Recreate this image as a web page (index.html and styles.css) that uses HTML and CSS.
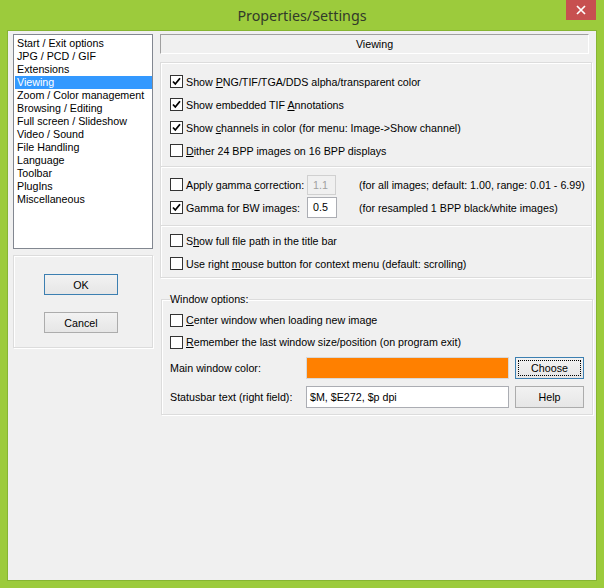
FILE: index.html
```html
<!DOCTYPE html>
<html>
<head>
<meta charset="utf-8">
<link rel="stylesheet" href="styles.css">
</head>
<body>
<div class="window">
  <div class="titlebar">
    <span class="title">Properties/Settings</span>
    <div class="close"><svg width="10" height="10" viewBox="0 0 10 10"><path d="M1 1 L9 9 M9 1 L1 9" stroke="#fff" stroke-width="1.7" fill="none"/></svg></div>
  </div>
  <div class="client">
    <div class="leftcol">
      <ul class="list">
        <li>Start / Exit options</li>
        <li>JPG / PCD / GIF</li>
        <li>Extensions</li>
        <li class="sel">Viewing</li>
        <li>Zoom / Color management</li>
        <li>Browsing / Editing</li>
        <li>Full screen / Slideshow</li>
        <li>Video / Sound</li>
        <li>File Handling</li>
        <li>Language</li>
        <li>Toolbar</li>
        <li>PlugIns</li>
        <li>Miscellaneous</li>
      </ul>
      <div class="btnpanel">
        <button class="btn default">OK</button>
        <button class="btn">Cancel</button>
      </div>
    </div>
    <div class="rightcol">
      <div class="header">Viewing</div>
      <div class="groups">
        <div class="group g1">
          <div class="row"><svg class="cb" width="13" height="13" viewBox="0 0 13 13"><rect x="0.5" y="0.5" width="12" height="12" fill="#fff" stroke="#333"/><path d="M3 6.5 L5.3 9 L10 3.3" stroke="#000" stroke-width="1.8" fill="none"/></svg><span>Show <u>P</u>NG/TIF/TGA/DDS alpha/transparent color</span></div>
          <div class="row"><svg class="cb" width="13" height="13" viewBox="0 0 13 13"><rect x="0.5" y="0.5" width="12" height="12" fill="#fff" stroke="#333"/><path d="M3 6.5 L5.3 9 L10 3.3" stroke="#000" stroke-width="1.8" fill="none"/></svg><span>Show embedded TIF <u>A</u>nnotations</span></div>
          <div class="row"><svg class="cb" width="13" height="13" viewBox="0 0 13 13"><rect x="0.5" y="0.5" width="12" height="12" fill="#fff" stroke="#333"/><path d="M3 6.5 L5.3 9 L10 3.3" stroke="#000" stroke-width="1.8" fill="none"/></svg><span>Show <u>c</u>hannels in color (for menu: Image-&gt;Show channel)</span></div>
          <div class="row"><svg class="cb" width="13" height="13" viewBox="0 0 13 13"><rect x="0.5" y="0.5" width="12" height="12" fill="#fff" stroke="#333"/></svg><span><u>D</u>ither 24 BPP images on 16 BPP displays</span></div>
        </div>
        <div class="group g2">
          <div class="row grid">
            <div class="lbl"><svg class="cb" width="13" height="13" viewBox="0 0 13 13"><rect x="0.5" y="0.5" width="12" height="12" fill="#fff" stroke="#333"/></svg><span>Apply gamma <u>c</u>orrection:</span></div>
            <div class="num disabled">1.1</div>
            <span class="note">(for all images; default: 1.00, range: 0.01 - 6.99)</span>
          </div>
          <div class="row grid">
            <div class="lbl"><svg class="cb" width="13" height="13" viewBox="0 0 13 13"><rect x="0.5" y="0.5" width="12" height="12" fill="#fff" stroke="#333"/><path d="M3 6.5 L5.3 9 L10 3.3" stroke="#000" stroke-width="1.8" fill="none"/></svg><span>Gamma for BW images:</span></div>
            <div class="num">0.5</div>
            <span class="note">(for resampled 1 BPP black/white images)</span>
          </div>
        </div>
        <div class="group g3">
          <div class="row"><svg class="cb" width="13" height="13" viewBox="0 0 13 13"><rect x="0.5" y="0.5" width="12" height="12" fill="#fff" stroke="#333"/></svg><span>S<u>h</u>ow full file path in the title bar</span></div>
          <div class="row"><svg class="cb" width="13" height="13" viewBox="0 0 13 13"><rect x="0.5" y="0.5" width="12" height="12" fill="#fff" stroke="#333"/></svg><span>Use right <u>m</u>ouse button for context menu (default: scrolling)</span></div>
        </div>
      </div>
      <fieldset class="winopts">
        <legend>Window options:</legend>
        <div class="row r22"><svg class="cb" width="13" height="13" viewBox="0 0 13 13"><rect x="0.5" y="0.5" width="12" height="12" fill="#fff" stroke="#333"/></svg><span><u>C</u>enter window when loading new image</span></div>
        <div class="row r22"><svg class="cb" width="13" height="13" viewBox="0 0 13 13"><rect x="0.5" y="0.5" width="12" height="12" fill="#fff" stroke="#333"/></svg><span><u>R</u>emember the last window size/position (on program exit)</span></div>
        <div class="frow color-row">
          <span class="flabel">Main window color:</span>
          <div class="swatch"></div>
          <button class="btn small focus">Choose</button>
        </div>
        <div class="frow status-row">
          <span class="flabel">Statusbar text (right field):</span>
          <div class="textbox">$M, $E272, $p dpi</div>
          <button class="btn small">Help</button>
        </div>
      </fieldset>
    </div>
  </div>
</div>
</body>
</html>
```
FILE: styles.css
```css
* { box-sizing: border-box; }
html, body { margin: 0; padding: 0; }
body {
  width: 604px;
  height: 588px;
  font-family: "Liberation Sans", Arial, sans-serif;
  font-size: 10.7px;
  color: #000;
  background: #9ccb3c;
  overflow: hidden;
}
.window {
  position: relative;
  width: 604px;
  height: 588px;
  background: #9ccb3c;
  padding: 0 7px 7px 7px;
  display: flex;
  flex-direction: column;
}
.titlebar {
  height: 30px;
  flex: none;
  display: flex;
  align-items: center;
  justify-content: center;
}
.title {
  font-family: "Noto Sans", "Open Sans", sans-serif;
  font-size: 14.3px;
  color: #323a2a;
  margin-top: 1px;
}
.close {
  position: absolute;
  top: 0;
  right: 8px;
  width: 30px;
  height: 20px;
  background: #c75050;
  display: flex;
  align-items: center;
  justify-content: center;
}
.client {
  flex: 1;
  border: 1px solid #86b533;
  background: #f0f0f0;
  display: flex;
  align-items: flex-start;
  padding: 3px 0 0 5px;
  gap: 7px;
}
.leftcol {
  width: 140px;
  display: flex;
  flex-direction: column;
}
.list {
  height: 215px;
  margin: 0;
  padding: 2px 0 0 1px;
  list-style: none;
  border: 1px solid #828790;
  background: #fff;
}
.list li {
  height: 13px;
  line-height: 13px;
  padding-left: 2px;
  white-space: nowrap;
}
.list li.sel {
  background: #3399ff;
  color: #fff;
}
.btnpanel {
  margin-top: 6px;
  height: 93px;
  border: 1px solid #dcdcdc;
  box-shadow: inset 1px 1px 0 #fff, 1px 1px 0 #fff;
  display: flex;
  flex-direction: column;
  align-items: flex-start;
  padding: 18px 0 0 30px;
  gap: 17px;
}
.btn {
  width: 74px;
  height: 21px;
  padding: 0;
  font: inherit;
  color: #000;
  border: 1px solid #acacac;
  background: linear-gradient(#f2f2f2, #e6e6e6);
}
.btn.default { border-color: #3c7fb1; }
.btn.small { width: 69px; height: 22px; }
.btn.focus {
  border-color: #3c7fb1;
  outline: 1px dotted #000;
  outline-offset: -4px;
}
.rightcol {
  width: 433px;
  display: flex;
  flex-direction: column;
}
.header {
  width: 429px;
  height: 20px;
  border: 1px solid;
  border-color: #a0a0a0 #fff #fff #a0a0a0;
  text-align: center;
  line-height: 18px;
}
.groups {
  margin-top: 8px;
  width: 432px;
  border: 1px solid #dcdcdc;
  box-shadow: inset 1px 1px 0 #fff, 1px 1px 0 #fff;
}
.group { padding-left: 9px; }
.g1 { padding-top: 7px; padding-bottom: 4px; }
.g2 {
  border-top: 1px solid #dcdcdc;
  box-shadow: inset 0 1px 0 #fff;
  padding-top: 6px;
  padding-bottom: 6px;
}
.g3 {
  border-top: 1px solid #dcdcdc;
  box-shadow: inset 0 1px 0 #fff;
  padding-top: 3px;
  padding-bottom: 2px;
}
.row {
  height: 23px;
  display: flex;
  align-items: center;
  white-space: nowrap;
}
.row.r22 { height: 22px; }
.cb { flex: none; margin-right: 3px; display: block; }
.row.grid {
  display: grid;
  grid-template-columns: 137px 52px auto;
  align-items: center;
}
.lbl { display: flex; align-items: center; }
.num {
  width: 30px;
  height: 21px;
  border: 1px solid #abadb3;
  background: #fff;
  line-height: 19px;
  padding-left: 5px;
}
.num.disabled {
  width: 29px;
  height: 20px;
  line-height: 18px;
  border-color: #d0d0d0;
  background: #f0f0f0;
  color: #a0a0a0;
}
.winopts {
  margin: 15px 0 0 1px;
  width: 432px;
  height: 122px;
  padding: 3px 0 0 8px;
  border: 1px solid #dcdcdc;
  box-shadow: inset 1px 1px 0 #fff, 1px 1px 0 #fff;
}
.winopts legend {
  padding: 0 1px 0 0;
  line-height: 13px;
  height: 13px;
}
.frow {
  display: flex;
  align-items: center;
  height: 22px;
}
.color-row { margin-top: 4px; }
.status-row { margin-top: 7px; }
.flabel { width: 136px; flex: none; white-space: nowrap; }
.swatch {
  width: 203px;
  height: 22px;
  background: #ff8000;
  border: 1px solid #d8d8d8;
}
.textbox {
  width: 203px;
  height: 22px;
  background: #fff;
  border: 1px solid #abadb3;
  line-height: 20px;
  padding-left: 3px;
}
.frow .btn { margin-left: 6px; }
```
